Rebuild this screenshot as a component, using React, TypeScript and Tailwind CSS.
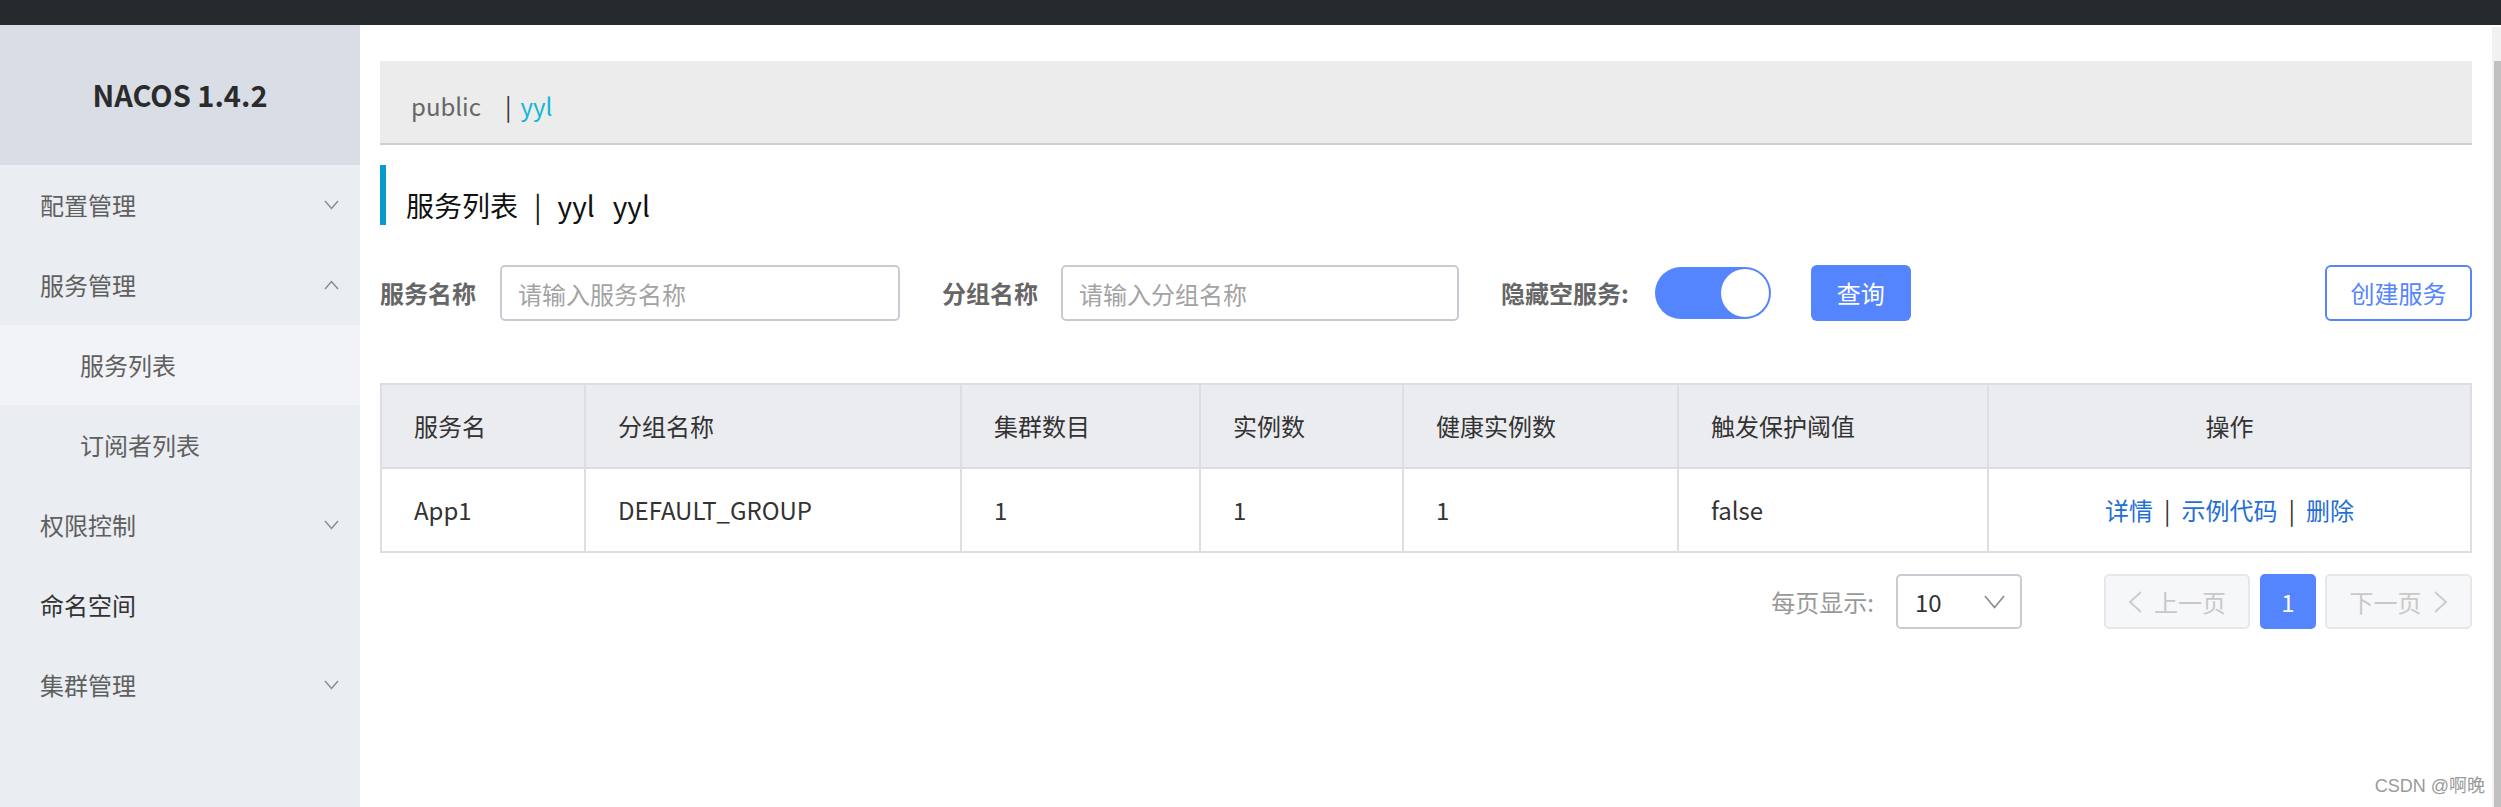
import React from "react";

const Chevron = ({ up = false }: { up?: boolean }) => (
  <svg width="15" height="10" viewBox="0 0 15 10" fill="none">
    <polyline
      points={up ? "1,9 7.5,1.5 14,9" : "1,1 7.5,8.5 14,1"}
      stroke="#8a8a8a"
      strokeWidth="1.4"
    />
  </svg>
);

const Arrow = ({ dir }: { dir: "left" | "right" | "down" }) => {
  if (dir === "down")
    return (
      <svg width="21" height="14" viewBox="0 0 21 14" fill="none">
        <polyline points="1,1 10.5,12.5 20,1" stroke="#8a8a8a" strokeWidth="1.6" />
      </svg>
    );
  return (
    <svg width="14" height="22" viewBox="0 0 14 22" fill="none">
      <polyline
        points={dir === "left" ? "13,1 2,11 13,21" : "1,1 12,11 1,21"}
        stroke="#cccccc"
        strokeWidth="2"
      />
    </svg>
  );
};

const menu = [
  { label: "配置管理", chevron: "down" },
  { label: "服务管理", chevron: "up" },
  { label: "服务列表", sub: true, active: true },
  { label: "订阅者列表", sub: true },
  { label: "权限控制", chevron: "down" },
  { label: "命名空间", dark: true },
  { label: "集群管理", chevron: "down" },
];

const columns = [
  { title: "服务名", width: 204, value: "App1" },
  { title: "分组名称", width: 376, value: "DEFAULT_GROUP" },
  { title: "集群数目", width: 239, value: "1" },
  { title: "实例数", width: 203, value: "1" },
  { title: "健康实例数", width: 275, value: "1" },
  { title: "触发保护阈值", width: 310, value: "false" },
];

const Sidebar = () => (
  <div className="w-[360px] shrink-0 bg-[#eaedf1] flex flex-col">
    <div className="h-[140px] bg-[#d9dee6] flex items-center justify-center">
      <span className="text-[29px] font-bold text-[#2b2b2b]">NACOS 1.4.2</span>
    </div>
    {menu.map((item) => (
      <div
        key={item.label}
        className={
          "h-[80px] flex items-center justify-between pr-[21px] text-[24px] " +
          (item.sub ? "pl-[80px] " : "pl-[40px] ") +
          (item.active ? "bg-[#f2f3f7] " : "") +
          (item.dark ? "text-[#333]" : "text-[#5f5f5f]")
        }
      >
        <span>{item.label}</span>
        {item.chevron && <Chevron up={item.chevron === "up"} />}
      </div>
    ))}
  </div>
);

export default function App() {
  return (
    <div className="relative w-full h-[807px] overflow-hidden flex flex-col bg-white font-['Noto_Sans_CJK_SC','Noto_Sans',sans-serif]">
      <div className="h-[25px] shrink-0 bg-[#252a2f]" />
      <div className="flex flex-1 min-h-0">
        <Sidebar />

        <div className="flex-1 px-5 pt-9 flex flex-col">
          {/* namespace bar */}
          <div className="h-[84px] shrink-0 bg-[#ececec] border-b-2 border-[#cfcfcf] flex items-center pl-[31px] pt-[8px] text-[24px]">
            <span className="text-[#666]">public</span>
            <span className="ml-[24px] text-[#333]">|</span>
            <span className="ml-[9px] text-[#12b7d6]">yyl</span>
          </div>

          {/* title */}
          <div className="mt-5 h-[60px] border-l-[6px] border-[#099acd] flex items-end pl-[20px] text-[28px] leading-[40px] text-[#111]">
            <span>服务列表</span>
            <span className="mx-[16px]">|</span>
            <span>yyl</span>
            <span className="ml-[18px]">yyl</span>
          </div>

          {/* filters */}
          <div className="mt-10 h-[56px] flex items-center text-[24px]">
            <span className="font-bold text-[#666] mr-[24px]">服务名称</span>
            <input
              className="w-[400px] h-[56px] border-2 border-[#c9cbd2] rounded-[5px] px-[16px] outline-none placeholder:text-[#a3a3a3]"
              placeholder="请输入服务名称"
            />
            <span className="ml-[42px] font-bold text-[#666] mr-[23px]">分组名称</span>
            <input
              className="w-[398px] h-[56px] border-2 border-[#c9cbd2] rounded-[5px] px-[16px] outline-none placeholder:text-[#a3a3a3]"
              placeholder="请输入分组名称"
            />
            <span className="ml-[42px] font-bold text-[#666] mr-[26px]">隐藏空服务:</span>
            <div className="w-[116px] h-[52px] rounded-full bg-[#5584ff] p-[2px] flex justify-end">
              <div className="w-[48px] h-[48px] rounded-full bg-white" />
            </div>
            <button className="ml-[40px] w-[100px] h-[56px] rounded-[6px] bg-[#5584ff] text-white">
              查询
            </button>
            <button className="ml-auto w-[147px] h-[56px] rounded-[6px] border-2 border-[#5584ff] bg-white text-[#5584ff]">
              创建服务
            </button>
          </div>

          {/* table */}
          <table className="mt-[62px] w-full table-fixed border-collapse text-[24px] text-[#333]">
            <colgroup>
              {columns.map((c) => (
                <col key={c.title} style={{ width: c.width }} />
              ))}
              <col />
            </colgroup>
            <thead>
              <tr className="bg-[#ebecf0]">
                {columns.map((c) => (
                  <th key={c.title} className="h-[84px] border-2 border-[#dcdee3] pl-[32px] text-left font-normal">
                    {c.title}
                  </th>
                ))}
                <th className="h-[84px] border-2 border-[#dcdee3] text-center font-normal">操作</th>
              </tr>
            </thead>
            <tbody>
              <tr>
                {columns.map((c) => (
                  <td key={c.title} className="h-[84px] border-2 border-[#dcdee3] pl-[32px]">
                    {c.value}
                  </td>
                ))}
                <td className="h-[84px] border-2 border-[#dcdee3] text-center">
                  <span className="text-[#1f6fd6]">详情</span>
                  <span className="mx-[11px] text-[#333]">|</span>
                  <span className="text-[#1f6fd6]">示例代码</span>
                  <span className="mx-[11px] text-[#333]">|</span>
                  <span className="text-[#1f6fd6]">删除</span>
                </td>
              </tr>
            </tbody>
          </table>

          {/* pagination */}
          <div className="mt-[21px] h-[55px] flex items-center justify-end text-[24px]">
            <span className="text-[#999] mr-[22px]">每页显示:</span>
            <div className="w-[126px] h-[55px] border-2 border-[#c9cbd2] rounded-[5px] flex items-center justify-between pl-[17px] pr-[15px] text-[#333]">
              <span>10</span>
              <Arrow dir="down" />
            </div>
            <div className="ml-[82px] w-[146px] h-[55px] bg-[#f6f7f9] border-2 border-[#e6e7eb] rounded-[5px] flex items-center justify-center gap-[12px] text-[#c8c8c8]">
              <Arrow dir="left" />
              <span>上一页</span>
            </div>
            <div className="ml-[10px] w-[56px] h-[55px] bg-[#5584ff] rounded-[5px] flex items-center justify-center text-white">
              1
            </div>
            <div className="ml-[9px] w-[147px] h-[55px] bg-[#f6f7f9] border-2 border-[#e6e7eb] rounded-[5px] flex items-center justify-center gap-[12px] text-[#c8c8c8]">
              <span>下一页</span>
              <Arrow dir="right" />
            </div>
          </div>
        </div>

        {/* scrollbar */}
        <div className="w-[9px] shrink-0 pt-[2px] flex flex-col">
          <div className="h-[34px] bg-[#f1f1f1]" />
          <div className="flex-1 bg-[#f1f1f1] pl-[2px] flex">
            <div className="flex-1 bg-[#c1c1c1]" />
          </div>
        </div>
      </div>

      <span className="absolute right-[16px] bottom-[7px] text-[18px] text-[#9a9a9a] font-['Liberation_Sans','Noto_Sans_CJK_SC',sans-serif]">
        CSDN @啊晚
      </span>
    </div>
  );
}
